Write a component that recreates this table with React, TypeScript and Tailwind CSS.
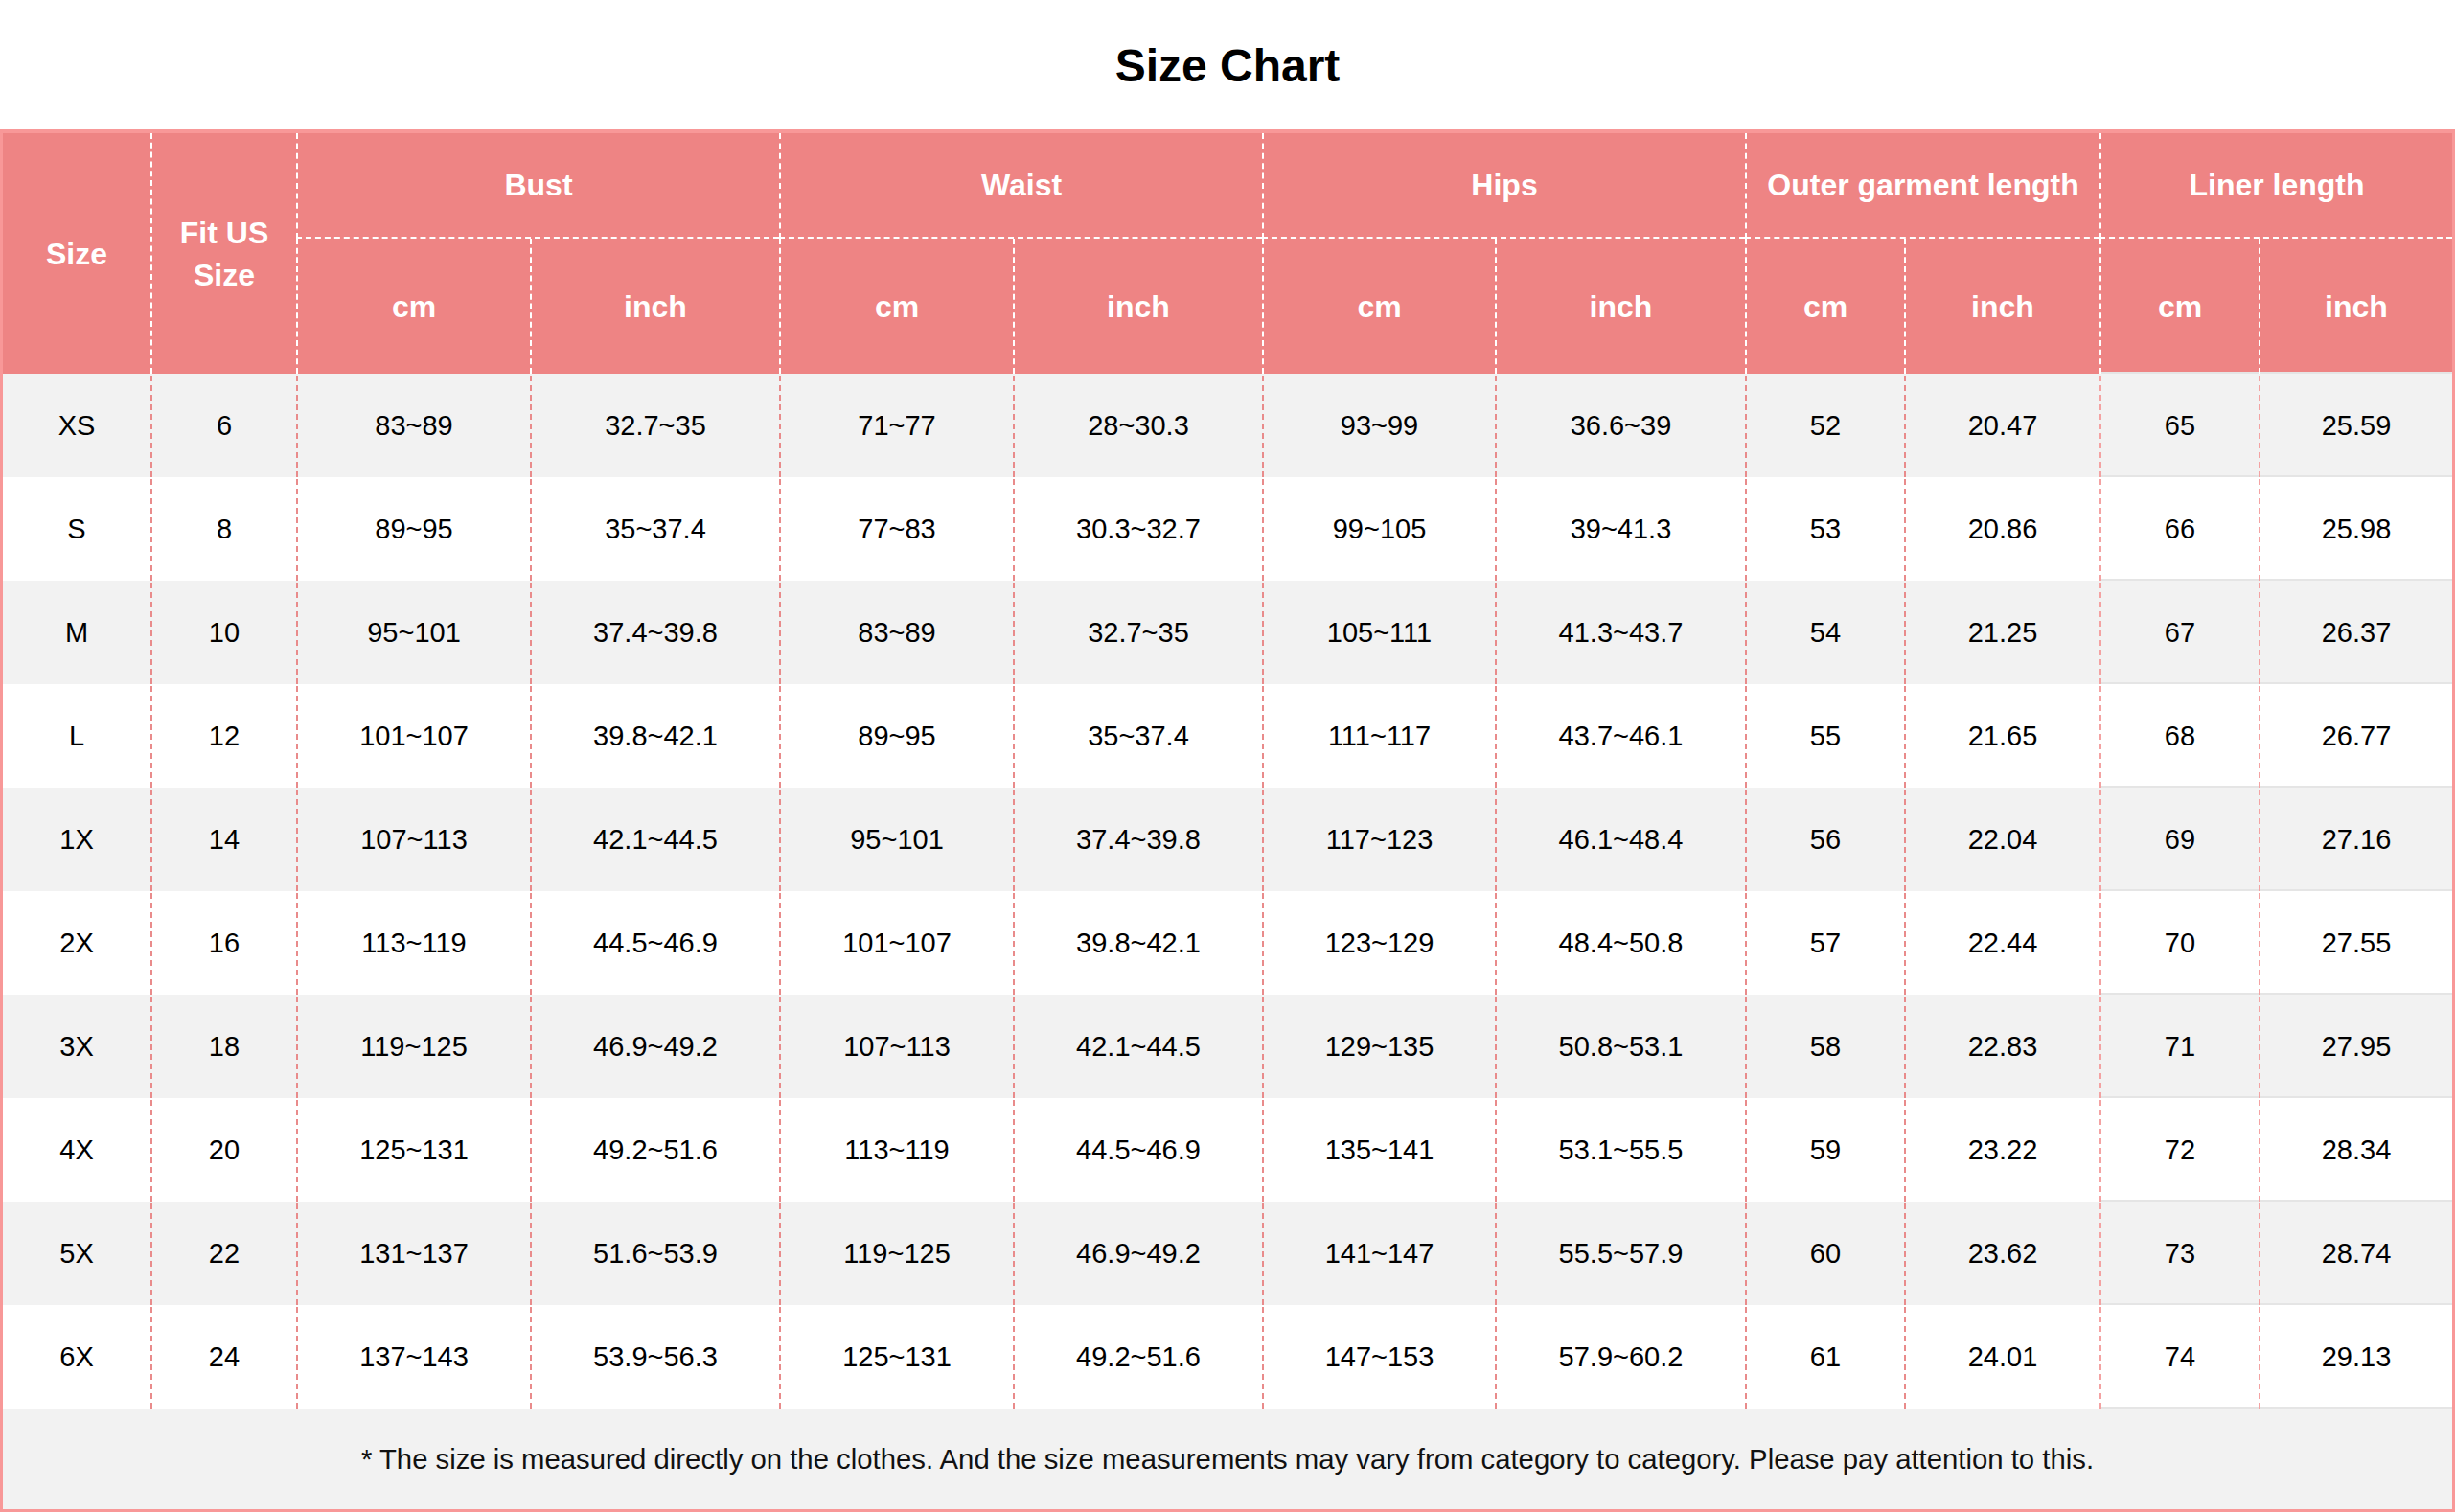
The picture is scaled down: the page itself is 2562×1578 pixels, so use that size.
import React from 'react'

const cols =
  'grid grid-cols-[154px_152px_244px_260px_244px_260px_243px_261px_166px_204px_166px_202px]'

const groups = ['Bust', 'Waist', 'Hips', 'Outer garment length', 'Liner length']

const rows: string[][] = [
  ['XS', '6', '83~89', '32.7~35', '71~77', '28~30.3', '93~99', '36.6~39', '52', '20.47', '65', '25.59'],
  ['S', '8', '89~95', '35~37.4', '77~83', '30.3~32.7', '99~105', '39~41.3', '53', '20.86', '66', '25.98'],
  ['M', '10', '95~101', '37.4~39.8', '83~89', '32.7~35', '105~111', '41.3~43.7', '54', '21.25', '67', '26.37'],
  ['L', '12', '101~107', '39.8~42.1', '89~95', '35~37.4', '111~117', '43.7~46.1', '55', '21.65', '68', '26.77'],
  ['1X', '14', '107~113', '42.1~44.5', '95~101', '37.4~39.8', '117~123', '46.1~48.4', '56', '22.04', '69', '27.16'],
  ['2X', '16', '113~119', '44.5~46.9', '101~107', '39.8~42.1', '123~129', '48.4~50.8', '57', '22.44', '70', '27.55'],
  ['3X', '18', '119~125', '46.9~49.2', '107~113', '42.1~44.5', '129~135', '50.8~53.1', '58', '22.83', '71', '27.95'],
  ['4X', '20', '125~131', '49.2~51.6', '113~119', '44.5~46.9', '135~141', '53.1~55.5', '59', '23.22', '72', '28.34'],
  ['5X', '22', '131~137', '51.6~53.9', '119~125', '46.9~49.2', '141~147', '55.5~57.9', '60', '23.62', '73', '28.74'],
  ['6X', '24', '137~143', '53.9~56.3', '125~131', '49.2~51.6', '147~153', '57.9~60.2', '61', '24.01', '74', '29.13'],
]

const SizeChartHeader = () => (
  <div className={`${cols} grid-rows-[110px_141px] bg-[#ee8484] text-white font-bold text-[32px]`}>
    <div className="row-span-2 flex items-center justify-center">Size</div>
    <div className="row-span-2 flex items-center justify-center text-center leading-[44px] border-l-2 border-dashed border-white">
      Fit US
      <br />
      Size
    </div>
    {groups.map((g) => (
      <div
        key={g}
        className="col-span-2 flex items-center justify-center border-l-2 border-b-2 border-dashed border-white"
      >
        {g}
      </div>
    ))}
    {groups.map((g, i) => (
      <React.Fragment key={g + '-units'}>
        <div
          className={`flex items-center justify-center border-l-2 border-dashed border-white ${
            i === 4 ? 'shadow-[inset_0_-2px_0_#e5e5e5]' : ''
          }`}
        >
          cm
        </div>
        <div
          className={`flex items-center justify-center border-l-2 border-dashed border-white ${
            i === 4 ? 'shadow-[inset_0_-2px_0_#e5e5e5]' : ''
          }`}
        >
          inch
        </div>
      </React.Fragment>
    ))}
  </div>
)

const App = () => {
  return (
    <div className="w-full bg-white font-['Liberation_Sans',Arial,sans-serif]">
      {/* Title */}
      <div className="h-[135px] pt-[3px] flex items-center justify-center">
        <h1 className="text-[48px] font-bold text-black">Size Chart</h1>
      </div>

      {/* Table */}
      <div className="border-t-4 border-x-[3px] border-b-[3px] border-[#f89898]">
        <SizeChartHeader />

        {rows.map((row, r) => (
          <div
            key={row[0]}
            className={`${cols} h-[108px] pt-[2px] text-[29px] text-black ${
              r % 2 === 0 ? 'bg-[#f2f2f2]' : 'bg-white'
            }`}
          >
            {row.map((cell, c) => (
              <div
                key={c}
                className={`flex items-center justify-center ${
                  c === 0
                    ? ''
                    : c >= 10
                      ? 'border-l-2 border-dashed border-[#f4a2a2]'
                      : 'border-l-2 border-dashed border-[#e98b8b]'
                } ${c >= 10 ? 'shadow-[inset_0_-2px_0_#e5e5e5]' : ''}`}
              >
                {cell}
              </div>
            ))}
          </div>
        ))}

        {/* Note */}
        <div className="h-[105px] flex items-center justify-center bg-[#f2f2f2] text-[29.3px] text-[#111]">
          * The size is measured directly on the clothes. And the size measurements may vary from
          category to category. Please pay attention to this.
        </div>
      </div>
    </div>
  )
}

export default App
